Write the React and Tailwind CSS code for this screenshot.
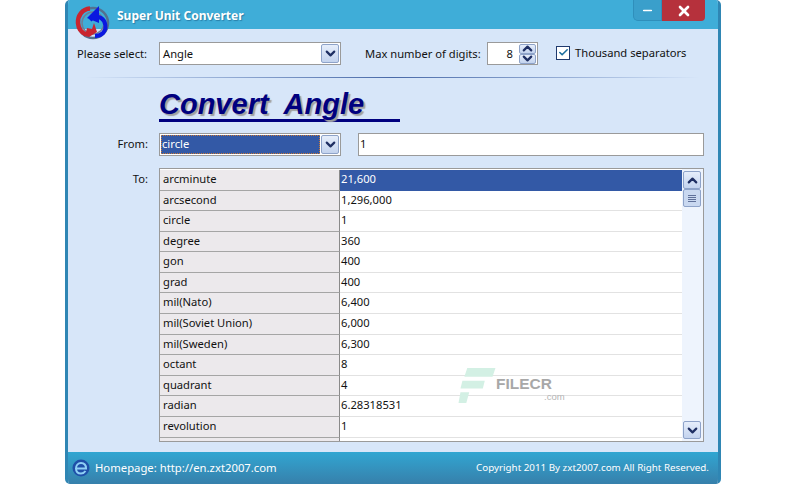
import { ChevronDown, ChevronUp, Check, Minus, X } from 'lucide-react';

const font = { fontFamily: '"Noto Sans", sans-serif' };

const rows = [
  ['arcminute', '21,600'],
  ['arcsecond', '1,296,000'],
  ['circle', '1'],
  ['degree', '360'],
  ['gon', '400'],
  ['grad', '400'],
  ['mil(Nato)', '6,400'],
  ['mil(Soviet Union)', '6,000'],
  ['mil(Sweden)', '6,300'],
  ['octant', '8'],
  ['quadrant', '4'],
  ['radian', '6.28318531'],
  ['revolution', '1'],
  ['', ''],
];

function ArrowButton({ up, className }) {
  const Icon = up ? ChevronUp : ChevronDown;
  return (
    <div className={`flex items-center justify-center rounded-[2px] border border-[#8ea3c9] bg-gradient-to-b from-[#e6eefb] to-[#c3d3ee] ${className}`}>
      <Icon size={15} strokeWidth={3.5} className="text-[#1f2f63]" />
    </div>
  );
}

function AppLogo() {
  return (
    <svg width="36" height="36" viewBox="0 0 36 36" className="shrink-0">
      <circle cx="18" cy="19" r="15" fill="none" stroke="#54708f" strokeWidth="2.500" />
      <circle cx="18" cy="19" r="11" fill="none" stroke="#6d7f96" strokeWidth="1.500" />
      <path d="M15 4.500C7 5 2.500 12 3 19c.4 5 3.500 9.500 8 11.500" fill="none" stroke="#c9252f" strokeWidth="4.500" />
      <path d="M10 32l2-8 5 1 2-6 3 9-8 5z" fill="#c9252f" />
      <path d="M15 16c3-3 8-4 11-2 5 3 6 11 2 15-2 2-5 3-8 3" fill="none" stroke="#0a18e0" strokeWidth="4" />
      <path d="M24 2l-12 12 12 5z" fill="#0a18e0" />
    </svg>
  );
}

function IeLogo() {
  return (
    <svg width="18" height="18" viewBox="0 0 18 18" className="shrink-0">
      <circle cx="9" cy="9" r="8.500" fill="#1f4fa8" />
      <path d="M4 9.500h10c0-3.500-2-5.500-5-5.500s-5 2.500-5 5.500 2 5 5 5c2 0 3.500-1 4.500-2.500" fill="none" stroke="#8fd0f5" strokeWidth="2" />
    </svg>
  );
}

export default function App() {
  return (
    <div className="h-[484px] w-[786px] bg-white text-[11.2px] text-[#111]" style={font}>
      <div className="ml-[65px] flex h-[484px] w-[656px] flex-col overflow-hidden rounded-t-[5px] rounded-b-[5px] border-x-[3px] border-[#2f86b4] bg-[#d7e6f9]">
        {/* Title bar */}
        <div className="flex h-[29px] shrink-0 items-start bg-[#3fadd8]">
          <div className="ml-[7px] mt-[4px]">
            <AppLogo />
          </div>
          <div className="ml-[6px] mt-[7px] text-[12px] font-bold text-white [text-shadow:1px_1px_1px_#2a7fa8]">Super Unit Converter</div>
          <div className="ml-auto mr-[13px] flex">
            <div className="flex h-[21px] w-[29px] items-center justify-center rounded-bl-[5px] border border-t-0 border-[#2f8fbb] bg-[#3a9fcb]">
              <Minus size={13} strokeWidth={3} className="text-white" />
            </div>
            <div className="flex h-[21px] w-[43px] items-center justify-center rounded-br-[4px] bg-[#b6313c]">
              <X size={16} strokeWidth={4} className="text-white" />
            </div>
          </div>
        </div>

        {/* Settings row */}
        <div className="mt-[13px] flex h-[23px] shrink-0 items-center whitespace-nowrap pl-[9px]">
          <span className="w-[82px] pt-px">Please select:</span>
          <div className="flex h-[23px] w-[182px] items-center justify-between border border-[#9a9a9a] bg-white pl-[3px] pr-px">
            <span className="pt-px">Angle</span>
            <ArrowButton className="h-[19px] w-[18px]" />
          </div>
          <span className="ml-[24px] w-[122px] pt-px">Max number of digits:</span>
          <div className="flex h-[23px] w-[51px] items-center justify-between border border-[#9a9a9a] bg-white pr-px">
            <span className="ml-auto mr-[6px] pt-px">8</span>
            <div className="flex w-[17px] flex-col">
              <ArrowButton up className="h-[10px] w-[17px]" />
              <ArrowButton className="h-[10px] w-[17px]" />
            </div>
          </div>
          <div className="mb-[2px] ml-[18px] flex h-[14px] w-[14px] items-center justify-center border border-[#1f3a6e] bg-white">
            <Check size={11} strokeWidth={3.5} className="text-[#1c6f9e]" />
          </div>
          <span className="ml-[5px]">Thousand separators</span>
        </div>

        {/* Divider */}
        <div className="ml-[17px] mt-[12px] h-px w-[615px] shrink-0 bg-gradient-to-r from-[#d7e6f9] via-[#4a6aa8] to-[#d7e6f9]" />

        {/* Heading */}
        <div className="ml-[91px] mt-[11px] h-[33px] w-[241px] shrink-0 border-b-[3px] border-[#00007f]">
          <span
            className="whitespace-pre text-[29px] font-bold italic leading-[31px] text-[#00007f] [text-shadow:2px_2px_1px_#a0a0a0]"
            style={{ fontFamily: '"Liberation Sans", sans-serif' }}
          >
            Convert  Angle
          </span>
        </div>

        {/* From row */}
        <div className="mt-[11px] flex h-[23px] shrink-0 items-center">
          <span className="w-[80px] text-right">From:</span>
          <div className="ml-[11px] flex h-[23px] w-[182px] items-center justify-between border border-[#9a9a9a] bg-white pl-px pr-px">
            <span className="mr-px flex h-[19px] flex-1 items-center border border-dotted border-[#c77a3a] bg-[#3359a6] text-white">circle</span>
            <ArrowButton className="h-[19px] w-[18px]" />
          </div>
          <div className="ml-[17px] flex h-[23px] w-[346px] items-center border border-[#9a9a9a] bg-white pl-px">1</div>
        </div>

        {/* To table */}
        <div className="mt-[12px] flex shrink-0 items-start">
          <span className="mt-[3px] w-[80px] text-right">To:</span>
          <div className="relative ml-[11px] flex h-[274px] w-[545px] overflow-hidden border border-[#9a9a9a] bg-white">
            <div className="h-full flex-1 overflow-hidden pt-px">
              {rows.map(([name, value], i) => (
                <div key={i} className="flex h-[20.58px] leading-[18px]">
                  <div className="w-[180px] shrink-0 border-b border-r border-b-[#a5a5a5] border-r-[#8a8a8a] bg-[#ece9ec] pl-[3px]">{name}</div>
                  <div className={`flex-1 border-b pl-px ${i === 0 ? 'border-[#3359a6] bg-[#3359a6] text-white' : 'border-[#e2e2e2]'}`}>{value}</div>
                </div>
              ))}
            </div>
            <div className="flex h-full w-[21px] shrink-0 flex-col justify-between bg-[#eef4fd] py-[2px] pl-px pr-[2px]">
              <div>
                <ArrowButton up className="h-[18px] w-[18px]" />
                <div className="flex h-[18px] w-[18px] flex-col items-center justify-center gap-px rounded-[2px] border border-[#8ea3c9] bg-[#c9d8f0]">
                  <div className="h-px w-[8px] bg-[#5f7099]" />
                  <div className="h-px w-[8px] bg-[#5f7099]" />
                  <div className="h-px w-[8px] bg-[#5f7099]" />
                  <div className="h-px w-[8px] bg-[#5f7099]" />
                </div>
              </div>
              <ArrowButton className="h-[18px] w-[18px]" />
            </div>
            {/* Watermark */}
            <div className="absolute left-[298px] top-[199px] flex">
              <svg width="38" height="35" viewBox="0 0 38 36">
                <path d="M9 0h29l-3 9H6zM4 13h23l-2 8H2zM2 25h9l-3 11H0z" fill="#d3f0e4" />
              </svg>
              <div className="mt-[8px] w-[70px]" style={{ fontFamily: '"Liberation Sans", sans-serif' }}>
                <div className="text-[15.500px] font-bold leading-[16px] text-[#a8a8a8]">FILECR</div>
                <div className="ml-[48px] text-[9.500px] leading-[10px] text-[#b5b5b5]">.com</div>
              </div>
            </div>
          </div>
        </div>

        {/* Footer */}
        <div className="mt-auto flex h-[32px] shrink-0 items-center whitespace-nowrap bg-gradient-to-b from-[#30a6d2] to-[#3680ab] pl-[4px] pr-[9px] text-white">
          <IeLogo />
          <span className="ml-[5px] text-[11.3px]">Homepage: http://en.zxt2007.com</span>
          <span className="ml-auto text-[9.800px]">Copyright 2011 By zxt2007.com All Right Reserved.</span>
        </div>
      </div>
    </div>
  );
}
